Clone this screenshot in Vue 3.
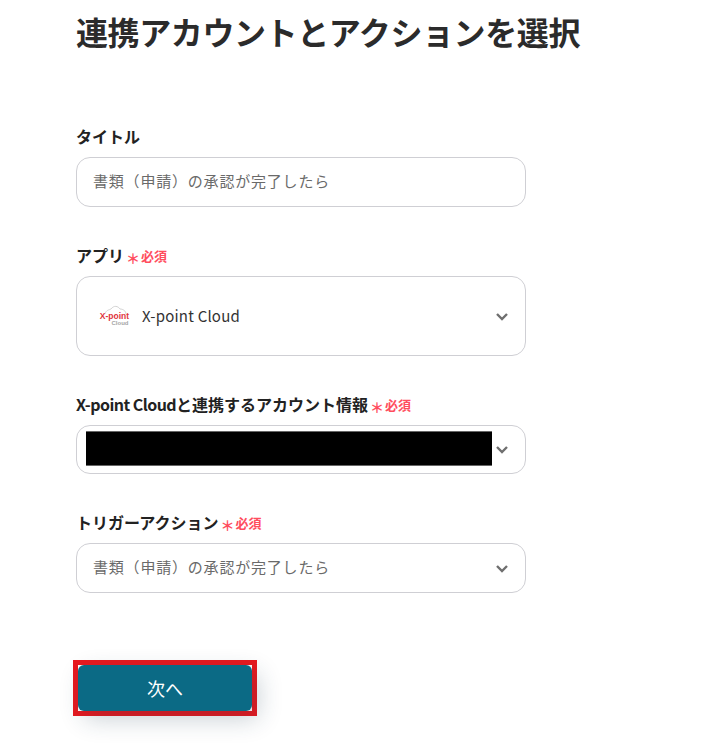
<template>
  <div class="page">
    <h1 class="title">連携アカウントとアクションを選択</h1>

    <div class="field first">
      <div class="label">タイトル</div>
      <div class="control">
        <span class="value muted">{{ triggerName }}</span>
      </div>
    </div>

    <div class="field">
      <div class="label">アプリ<span class="req"><i>＊</i>必須</span></div>
      <div class="control app">
        <svg class="logo" width="32" height="24" viewBox="0 0 32 24">
          <path d="M6 10 C7 6 10 6 12 5 C15 1 19 2 21 5 C24 5 27 7 27 10" fill="none" stroke="#d4d4d4" stroke-width="1" />
          <text x="15.500" y="15" text-anchor="middle" class="logo-red">X-point</text>
          <text x="21" y="21" text-anchor="middle" class="logo-grey">Cloud</text>
        </svg>
        <span class="value dark">X-point Cloud</span>
        <svg class="chevron" width="14" height="9" viewBox="0 0 14 9"><path d="M2 2 L7 7 L12 2" /></svg>
      </div>
    </div>

    <div class="field">
      <div class="label"><span class="latin">X-point Cloud</span>と連携するアカウント情報<span class="req"><i>＊</i>必須</span></div>
      <div class="control account">
        <div class="mask"></div>
        <svg class="chevron" width="14" height="9" viewBox="0 0 14 9"><path d="M2 2 L7 7 L12 2" /></svg>
      </div>
    </div>

    <div class="field">
      <div class="label">トリガーアクション<span class="req"><i>＊</i>必須</span></div>
      <div class="control">
        <span class="value muted">{{ triggerName }}</span>
        <svg class="chevron" width="14" height="9" viewBox="0 0 14 9"><path d="M2 2 L7 7 L12 2" /></svg>
      </div>
    </div>

    <div class="actions">
      <button class="next" type="button">次へ</button>
    </div>
  </div>
</template>

<script setup>
const triggerName = '書類（申請）の承認が完了したら'
</script>

<style>
html, body {
  background: #fff;
}
</style>

<style scoped>
.page {
  width: 721px;
  height: 745px;
  box-sizing: border-box;
  padding: 12px 0 0 76px;
  overflow: hidden;
  font-family: "Noto Sans CJK JP", "Noto Sans", sans-serif;
  color: #222;
}
.title {
  margin: 0;
  font-size: 32px;
  line-height: 38px;
  font-weight: 700;
  letter-spacing: -0.4px;
  color: #2b2b2b;
}
.field {
  width: 450px;
  margin-top: 37px;
}
.field.first {
  margin-top: 75px;
}
.label {
  height: 24px;
  margin-bottom: 8px;
  font-size: 16px;
  line-height: 22px;
  font-weight: 700;
  color: #222;
  white-space: nowrap;
}
.latin {
  letter-spacing: -0.55px;
}
.req {
  margin-left: 2px;
  font-size: 13px;
  font-weight: 700;
  color: #ff4d5e;
  vertical-align: 1px;
}
.req i {
  font-style: normal;
  font-size: 14px;
  font-weight: 700;
  line-height: 10px;
  margin-right: 1px;
  vertical-align: -3px;
}
.control {
  display: flex;
  align-items: center;
  height: 50px;
  box-sizing: border-box;
  padding: 0 16px;
  border: 1px solid #cfcfd4;
  border-radius: 14px;
  background: #fff;
}
.control.app {
  height: 80px;
  padding-left: 22px;
}
.control.account {
  height: 49px;
  padding-left: 9px;
}
.value {
  padding-bottom: 2px;
  font-size: 15px;
  letter-spacing: 0.2px;
}
.muted {
  padding-bottom: 4px;
  color: #6a6a6a;
  letter-spacing: 0.8px;
}
.dark {
  color: #333;
  margin-left: 11px;
}
.logo {
  flex: none;
}
.logo-red {
  font: 700 8.500px "Liberation Sans", sans-serif;
  fill: #e0333c;
}
.logo-grey {
  font: 700 6px "Liberation Sans", sans-serif;
  fill: #a5a5a5;
}
.chevron {
  margin-left: auto;
  flex: none;
}
.chevron path {
  fill: none;
  stroke: #6f6f6f;
  stroke-width: 2.4;
}
.mask {
  width: 406px;
  height: 35px;
  box-sizing: border-box;
  margin-bottom: 2px;
  background: #000;
  border-top: 1px solid #666;
  border-bottom: 1px solid #666;
}
.actions {
  margin: 67px 0 0 -3px;
  width: 184px;
  height: 56px;
  box-sizing: border-box;
  border: 5px solid #e8191f;
}
.next {
  display: block;
  width: 100%;
  height: 100%;
  border: 0;
  border-radius: 6px;
  background: #0b6a85;
  color: #fff;
  font-family: inherit;
  font-size: 18px;
  box-shadow: 6px 8px 24px rgba(30, 60, 80, 0.24);
}
</style>
